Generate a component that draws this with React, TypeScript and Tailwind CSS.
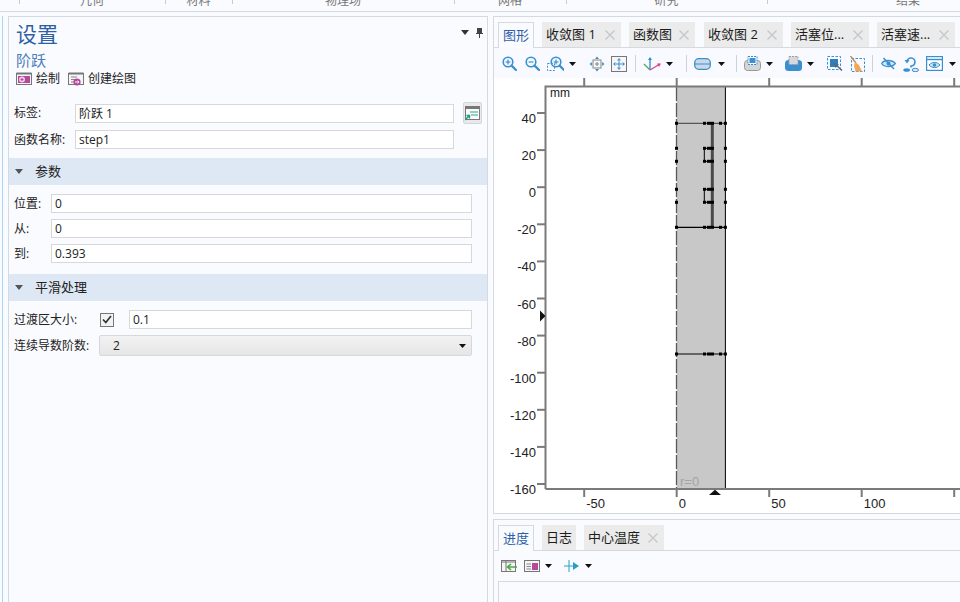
import type { ReactNode } from 'react';

const blue = '#3a8fd0';

function Svg({ w, h, className = '', children }: { w: number; h: number; className?: string; children: ReactNode }) {
  return (
    <svg width={w} height={h} viewBox={`0 0 ${w} ${h}`} fill="none" className={`shrink-0 ${className}`}>
      {children}
    </svg>
  );
}

function Caret({ className = '' }: { className?: string }) {
  return (
    <Svg w={7} h={4} className={className}>
      <path d="M0 0H7L3.5 4Z" fill="#111" />
    </Svg>
  );
}

function Sep({ className = '' }: { className?: string }) {
  return <div className={`w-px h-[17px] bg-[#ccd2da] shrink-0 ${className}`} />;
}

function Lens({ minus, plus }: { minus?: boolean; plus?: boolean }) {
  return (
    <>
      <circle cx="6" cy="6" r="4.8" stroke={blue} strokeWidth="1.6" fill="#f4f9fe" />
      {(minus || plus) && <path d="M3.6 6H8.4" stroke={blue} strokeWidth="1.2" />}
      {plus && <path d="M6 3.6V8.4" stroke={blue} strokeWidth="1.2" />}
      <path d="M9.6 9.6L14 14" stroke={blue} strokeWidth="2.2" strokeLinecap="round" />
    </>
  );
}

function Arrows({ c = 8, d = 7.5 }: { c?: number; d?: number }) {
  return (
    <path
      d={`M${c} ${c - d}l2 2.4h-4ZM${c} ${c + d}l2 -2.4h-4ZM${c - d} ${c}l2.4 -2v4ZM${c + d} ${c}l-2.4 -2v4Z`}
      fill={blue}
    />
  );
}

function PlotIcon({ more }: { more?: boolean }) {
  return (
    <Svg w={16} h={14}>
      <rect x="0.5" y="1.5" width="15" height="11" fill="#f5f5f5" stroke="#777" />
      <path d="M0.5 1.5H15.5" stroke="#777" strokeWidth="2" />
      {more ? (
        <>
          <path d="M3 5H9M3 7.5H7M3 10H7" stroke="#888" />
          <circle cx="9" cy="10" r="3.6" fill="#b4489c" />
          <path d="M7 10H11M9.6 8.6L11 10L9.6 11.4" stroke="#fff" />
        </>
      ) : (
        <>
          <rect x="2" y="4" width="12" height="7" fill="#b4489c" />
          <circle cx="6" cy="7.5" r="3" fill="#e9cde3" />
          <path d="M4.5 7.5H7.5M6 6V9" stroke="#b4489c" />
        </>
      )}
    </Svg>
  );
}

function Field({ value, className = '' }: { value: string; className?: string }) {
  return (
    <div className={`h-[19px] flex-1 min-w-0 bg-white border border-[#d6d8dc] pl-[3px] text-[12px] leading-[17px] text-[#222] ${className}`}>
      {value}
    </div>
  );
}

function Section({ title, className = '' }: { title: string; className?: string }) {
  return (
    <div className={`h-[27px] bg-[#dee8f4] flex items-center pl-[6px] text-[13px] text-[#222] ${className}`}>
      <Svg w={8} h={5}>
        <path d="M0 0H8L4 5Z" fill="#555" />
      </Svg>
      <span className="ml-[12px]">{title}</span>
    </div>
  );
}

function Tab({ label, width, active, close, className = '' }: { label: string; width: string; active?: boolean; close?: boolean; className?: string }) {
  if (active) {
    return (
      <div className={`${width} h-[26px] -mb-px shrink-0 bg-[#fafbff] border border-b-0 border-[#d5d9e0] text-[#2f5fa5] text-[13px] leading-[25px] text-center ${className}`}>
        {label}
      </div>
    );
  }
  return (
    <div className={`${width} h-[25px] shrink-0 bg-[#ebebeb] flex items-center justify-between pl-[4px] pr-[6px] text-[13px] text-[#1c1c1c] ${className}`}>
      <span className="whitespace-nowrap">{label}</span>
      {close && (
        <Svg w={10} h={10}>
          <path d="M0.5 0.5L9.5 9.5M9.5 0.5L0.5 9.5" stroke="#c4c6ca" strokeWidth="1.3" />
        </Svg>
      )}
    </div>
  );
}

function TopSeg({ label, width }: { label: string; width: string }) {
  return (
    <div className={`${width} shrink-0 flex flex-col`}>
      <div className="w-px h-[4px] bg-[#c8ccd2]" />
      <div className="-mt-[11px] text-center text-[12px] leading-[16px] text-[#777]">{label}</div>
    </div>
  );
}

function GraphToolbar() {
  return (
    <div className="h-[30px] flex items-center pl-[8px] pt-[1px] bg-[#f8faff]">
      <Svg w={15} h={15}><Lens plus /></Svg>
      <Svg w={15} h={15} className="ml-[8px]"><Lens minus /></Svg>
      <Svg w={17} h={15} className="ml-[7px]">
        <g transform="translate(3 0)"><Lens plus /></g>
        <rect x="0.5" y="7.5" width="7" height="7" stroke={blue} strokeDasharray="2 1.4" />
      </Svg>
      <Caret className="ml-[5px]" />
      <Svg w={16} h={16} className="ml-[13px]">
        <rect x="4" y="4" width="8" height="8" stroke="#888" fill="#f6f6f6" />
        <path d="M8 6V10M6 8H10" stroke="#888" />
        <Arrows />
      </Svg>
      <Svg w={16} h={16} className="ml-[6px]">
        <rect x="0.5" y="0.5" width="15" height="15" stroke="#777" fill="#f6f6f6" />
        <Arrows d={6} />
        <path d="M8 5V11M5 8H11" stroke={blue} />
      </Svg>
      <Sep className="ml-[8px]" />
      <Svg w={18} h={16} className="ml-[7px]">
        <path d="M7 14V2" stroke="#2a8fc8" strokeWidth="1.3" />
        <path d="M7 1L9 4H5Z" fill="#2a8fc8" />
        <path d="M7 14L1 8" stroke="#4cab55" strokeWidth="1.3" />
        <path d="M7 14L17 8" stroke="#d9468c" strokeWidth="1.3" />
        <path d="M18 7.5L14 7.5L16 11Z" fill="#d9468c" />
      </Svg>
      <Caret className="ml-[5px]" />
      <Sep className="ml-[13px]" />
      <Svg w={17} h={12} className="ml-[7px]">
        <rect x="0.7" y="0.7" width="15.6" height="10.6" rx="4" fill="#cbd8e6" stroke={blue} strokeWidth="1.3" />
        <path d="M1 6H16" stroke={blue} />
      </Svg>
      <Caret className="ml-[7px]" />
      <Sep className="ml-[11px]" />
      <Svg w={17} h={15} className="ml-[7px]">
        <rect x="0.5" y="4.5" width="16" height="10" rx="3" fill="#d5d5d5" stroke="#999" />
        <rect x="4" y="0.5" width="9" height="8" fill="#fafbff" stroke={blue} strokeDasharray="2 1" />
        <rect x="5.5" y="2" width="6" height="5" fill={blue} />
      </Svg>
      <Caret className="ml-[5px]" />
      <Svg w={17} h={15} className="ml-[12px]">
        <rect x="0" y="4" width="17" height="11" rx="3.5" fill={blue} />
        <rect x="4" y="0.5" width="9" height="8" fill="#d5d8dc" stroke="#9aa0a6" strokeDasharray="2 1" />
      </Svg>
      <Caret className="ml-[5px]" />
      <Svg w={16} h={15} className="ml-[13px]">
        <rect x="0.5" y="0.5" width="13" height="13" stroke={blue} strokeDasharray="2.5 1.5" />
        <rect x="3" y="3" width="8" height="8" fill="#2d7fc0" />
        <path d="M7.5 7.5L15 14.5" stroke="#5a6a78" strokeWidth="1.5" />
        <path d="M7 7L12 8.5L8.5 12Z" fill="#5a6a78" />
      </Svg>
      <Svg w={15} h={16} className="ml-[7px]">
        <rect x="1.5" y="2.5" width="13" height="13" stroke={blue} strokeDasharray="2.5 1.5" />
        <path d="M0.5 0L6 7" stroke="#b98a52" strokeWidth="1.3" />
        <path d="M5 6L9 9L12 15.5H5.5L4 10Z" fill="#f0a858" />
      </Svg>
      <Sep className="ml-[7px]" />
      <Svg w={15} h={13} className="ml-[8px]">
        <path d="M0.7 6.5C3 2.5 11 2.5 14.3 6.5C11 10.5 3 10.5 0.7 6.5Z" stroke={blue} strokeWidth="1.3" fill="#d6e8f6" />
        <circle cx="7.5" cy="6.5" r="2" fill={blue} />
        <path d="M2.5 1L13 12" stroke={blue} strokeWidth="1.5" />
      </Svg>
      <Svg w={16} h={16} className="ml-[7px]">
        <path d="M4 5.5A4 4 0 1 1 8 10V11.5" stroke={blue} strokeWidth="1.6" />
        <path d="M1.5 4H6.5L4 7.5Z" fill={blue} />
        <ellipse cx="3.7" cy="14" rx="3.4" ry="1.8" fill={blue} />
        <ellipse cx="12.3" cy="14" rx="3.2" ry="1.7" stroke={blue} fill="#d6e8f6" />
      </Svg>
      <Svg w={17} h={15} className="ml-[7px]">
        <rect x="0.6" y="0.6" width="15.8" height="13.8" fill="#fdfeff" stroke={blue} strokeWidth="1.2" />
        <path d="M1 3.5H16" stroke={blue} strokeWidth="1.4" />
        <path d="M3 9C6 5.6 11 5.6 14 9C11 12.4 6 12.4 3 9Z" fill="#cfe3f4" stroke={blue} />
        <circle cx="8.5" cy="9" r="1.8" fill={blue} />
      </Svg>
      <Caret className="ml-[6px]" />
    </div>
  );
}

const yTicks = [40, 20, 0, -20, -40, -60, -80, -100, -120, -140, -160];
const xTicks = [-50, 0, 50, 100];
const yOf = (v: number) => 187.2 - v * 1.855;
const xOf = (v: number) => 676.7 + v * 1.85;

const lines = [123.3, 227.3, 354];
const sidePts = [123.3, 148.3, 161.3, 189.3, 202.3, 227.3, 354];
const innerRows = [148.3, 161.3, 189.3, 202.3];

function Chart() {
  return (
    <svg width={466} height={435} viewBox="494 78 466 435" fill="none" className="block bg-white">
      <rect x="676.5" y="87" width="49" height="402" fill="#c8c8c8" />
      <path d="M725.4 87V489" stroke="#000" strokeWidth="1" />
      <path d="M676.5 87V489" stroke="#5a5a5a" strokeWidth="1.3" strokeDasharray="14 2" />
      {lines.map((y, i) => (
        <path key={y} d={`M676.5 ${y}H725.4`} stroke={i === 0 ? '#555' : '#000'} strokeWidth="1.2" />
      ))}
      <path d="M712.3 123.3V227.3" stroke="#4a4a4a" strokeWidth="3" />
      {[148.3, 189.3].map((y) => (
        <path key={y} d={`M714 ${y}H704.3V${y + 13}H714`} stroke="#000" strokeWidth="1" />
      ))}
      {sidePts.map((y) => (
        <g key={y} fill="#000">
          <rect x="675" y={y - 1.5} width="3" height="3" />
          <rect x="723.9" y={y - 1.5} width="3" height="3" />
        </g>
      ))}
      {lines.map((y) => (
        <g key={y} fill="#000">
          <rect x="703" y={y - 1.5} width="3" height="3" />
          <rect x="707" y={y - 1.5} width="7" height="3" />
          <rect x="719" y={y - 1.5} width="3" height="3" />
        </g>
      ))}
      {innerRows.map((y) => (
        <g key={y} fill="#000">
          <rect x="703" y={y - 1.5} width="3" height="3" />
          <rect x="707" y={y - 1.5} width="7" height="3" />
        </g>
      ))}
      <path d="M545.5 489V86.5H960M545.5 489H960" stroke="#7a7a7a" strokeWidth="2" />
      {yTicks.map((v) => (
        <g key={v}>
          <path d={`M537 ${yOf(v)}H545`} stroke="#7a7a7a" strokeWidth="2" />
          <text x="536" y={yOf(v) + 10} textAnchor="end" fontSize="13" fill="#222" fontFamily="'Liberation Sans', sans-serif">
            {v}
          </text>
        </g>
      ))}
      {[...xTicks, 150].map((v) => (
        <g key={v}>
          <path d={`M${xOf(v)} 78V86`} stroke="#7a7a7a" strokeWidth="2" />
          <path d={`M${xOf(v)} 489V497`} stroke="#7a7a7a" strokeWidth="2" />
        </g>
      ))}
      {xTicks.map((v) => (
        <text key={v} x={xOf(v) + 2} y="508" fontSize="13" fill="#222" fontFamily="'Liberation Sans', sans-serif">
          {v}
        </text>
      ))}
      <text x="550" y="97" fontSize="12" fill="#222" fontFamily="'Liberation Sans', sans-serif">mm</text>
      <text x="680" y="486" fontSize="13" fill="#a4a4a4" fontFamily="'Liberation Sans', sans-serif">r=0</text>
      <path d="M540 310.5L545.5 316L540 321.5Z" fill="#111" />
      <path d="M709 495L715 489.8L721 495Z" fill="#111" />
    </svg>
  );
}

export default function App() {
  return (
    <div className="h-[602px] w-[960px] overflow-hidden flex flex-col bg-[#fafbff] font-['Open_Sans','Noto_Sans_CJK_SC',sans-serif]">
      {/* ribbon, only its bottom edge is in view */}
      <div className="h-[12px] shrink-0 border-b border-[#d5d9e0] flex pl-[19px] overflow-hidden">
        <TopSeg label="几何" width="w-[146px]" />
        <TopSeg label="材料" width="w-[67px]" />
        <TopSeg label="物理场" width="w-[222px]" />
        <TopSeg label="网格" width="w-[112px]" />
        <TopSeg label="研究" width="w-[201px]" />
        <TopSeg label="结果" width="w-[282px]" />
      </div>

      <div className="flex flex-1 mt-[4px] min-h-0">
        <div className="w-[6px] ml-[2px] shrink-0 border-l border-[#a6d5f7]" />

        {/* settings panel */}
        <div className="w-[480px] shrink-0 border border-b-0 border-[#d5d9e0] flex flex-col">
          <div className="h-[33px] flex justify-between pl-[7px] pr-[4px]">
            <div className="text-[21px] leading-[26px] mt-[4px] text-[#2f5fa5]">设置</div>
            <div className="flex items-start gap-[7px] mt-[11px]">
              <Svg w={8} h={5} className="mt-[2px]">
                <path d="M0 0H8L4 5Z" fill="#333" />
              </Svg>
              <Svg w={7} h={10}>
                <path d="M1 0H6V5H7V6H4V10H3V6H0V5H1Z" fill="#444" />
              </Svg>
            </div>
          </div>
          <div className="h-[20px] pl-[7px] text-[15px] leading-[20px] text-[#4f7dbb]">阶跃</div>
          <div className="h-[17px] flex items-center pl-[7px] text-[12px] text-[#222]">
            <PlotIcon />
            <span className="ml-[4px]">绘制</span>
            <span className="ml-[8px]"><PlotIcon more /></span>
            <span className="ml-[4px]">创建绘图</span>
          </div>

          <div className="mt-[15px] h-[22px] flex items-center pl-[5px] pr-[5px] text-[12px] text-[#222]">
            <div className="w-[61px] shrink-0">标签:</div>
            <Field value="阶跃 1" />
            <div className="ml-[9px] w-[19px] h-[22px] shrink-0 rounded-[2px] bg-[#e9e9e9] border border-[#d4d6d9] flex items-center justify-center">
              <Svg w={15} h={15}>
                <rect x="0.5" y="0.5" width="14" height="13" fill="#fafafa" stroke="#777" />
                <path d="M1 2H14" stroke="#777" strokeWidth="2" />
                <path d="M5 6H13M6 9H13" stroke="#2fa58c" />
                <path d="M0 14L4 10M1.5 9.5H4.5V12.5" stroke="#1f9c7c" strokeWidth="1.4" />
              </Svg>
            </div>
          </div>
          <div className="mt-[6px] flex items-center pl-[5px] pr-[33px] text-[12px] text-[#222]">
            <div className="w-[61px] shrink-0">函数名称:</div>
            <Field value="step1" />
          </div>

          <Section title="参数" className="mt-[9px]" />
          <div className="mt-[9px] flex flex-col gap-[6px] pl-[5px] pr-[15px] text-[12px] text-[#222]">
            {[['位置:', '0'], ['从:', '0'], ['到:', '0.393']].map(([label, value]) => (
              <div key={label} className="flex items-center">
                <div className="w-[37px] shrink-0">{label}</div>
                <Field value={value} />
              </div>
            ))}
          </div>

          <Section title="平滑处理" className="mt-[11px]" />
          <div className="mt-[9px] flex items-center pl-[5px] pr-[15px] text-[12px] text-[#222]">
            <div className="w-[86px] shrink-0">过渡区大小:</div>
            <div className="w-[14px] h-[14px] shrink-0 bg-[#f2f2f2] border border-[#777] flex items-center justify-center">
              <Svg w={10} h={9}>
                <path d="M1 4.5L3.8 7.5L9 1" stroke="#333" strokeWidth="1.7" />
              </Svg>
            </div>
            <Field value="0.1" className="ml-[15px]" />
          </div>
          <div className="mt-[6px] flex items-center pl-[5px] pr-[15px] text-[12px] text-[#222]">
            <div className="w-[85px] shrink-0 whitespace-nowrap">连续导数阶数:</div>
            <div className="flex-1 h-[21px] rounded-[2px] border border-[#d6d8dc] bg-linear-to-b from-[#f2f2f2] to-[#e6e6e6] flex items-center justify-between pl-[13px] pr-[5px]">
              <span>2</span>
              <Caret />
            </div>
          </div>
        </div>

        {/* graphics + log column */}
        <div className="ml-[5px] flex-1 min-w-0 flex flex-col">
          <div className="h-[498px] shrink-0 border-t border-l border-b border-[#d5d9e0] flex flex-col overflow-hidden">
            <div className="mt-[5px] h-[26px] shrink-0 flex items-start gap-[8px] pl-[4px] border-b border-[#d5d9e0]">
              <Tab label="图形" width="w-[36px]" active />
              <Tab label="收敛图 1" width="w-[79px]" close />
              <Tab label="函数图" width="w-[66px]" close />
              <Tab label="收敛图 2" width="w-[79px]" close className="ml-px" />
              <Tab label="活塞位..." width="w-[78px]" close />
              <Tab label="活塞速..." width="w-[78px]" close />
            </div>
            <GraphToolbar />
            <Chart />
          </div>

          <div className="mt-[5px] flex-1 min-h-0 border-t border-l border-[#d5d9e0] flex flex-col">
            <div className="mt-[5px] h-[26px] shrink-0 flex items-start gap-[8px] pl-[4px] border-b border-[#d5d9e0]">
              <Tab label="进度" width="w-[36px]" active />
              <Tab label="日志" width="w-[34px]" />
              <Tab label="中心温度" width="w-[80px]" close />
            </div>
            <div className="h-[30px] shrink-0 flex items-center pl-[7px]">
              <Svg w={16} h={12}>
                <rect x="0.5" y="0.5" width="14" height="11" fill="#f5f5f5" stroke="#777" />
                <path d="M5 1V11M1 2H14" stroke="#777" />
                <path d="M16 7H7M10 4L6.5 7L10 10" stroke="#4cab45" strokeWidth="1.6" />
              </Svg>
              <Svg w={16} h={12} className="ml-[7px]">
                <rect x="0.5" y="0.5" width="15" height="11" fill="#f5f5f5" stroke="#777" />
                <path d="M2.5 4H7M2.5 6.5H7M2.5 9H7" stroke="#888" />
                <rect x="8" y="3" width="6" height="7" fill="#b4489c" />
              </Svg>
              <Caret className="ml-[5px]" />
              <Svg w={16} h={12} className="ml-[12px]">
                <path d="M5 0V12" stroke="#2a9ec0" />
                <path d="M0 6H9" stroke="#2a9ec0" />
                <path d="M9 2L15 6L9 10Z" fill="#2a9ec0" />
              </Svg>
              <Caret className="ml-[5px]" />
            </div>
            <div className="ml-[4px] flex-1 border-t border-l border-[#d5d9e0]" />
          </div>
        </div>
      </div>
    </div>
  );
}
